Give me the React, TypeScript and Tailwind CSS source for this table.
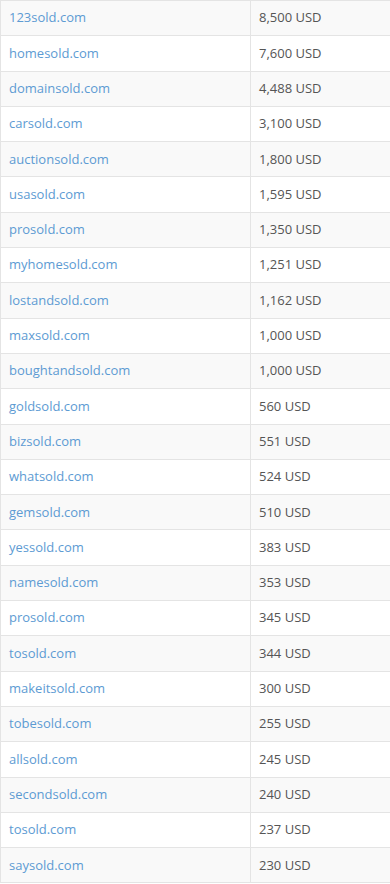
const rows: [string, string][] = [
  ["123sold.com", "8,500 USD"],
  ["homesold.com", "7,600 USD"],
  ["domainsold.com", "4,488 USD"],
  ["carsold.com", "3,100 USD"],
  ["auctionsold.com", "1,800 USD"],
  ["usasold.com", "1,595 USD"],
  ["prosold.com", "1,350 USD"],
  ["myhomesold.com", "1,251 USD"],
  ["lostandsold.com", "1,162 USD"],
  ["maxsold.com", "1,000 USD"],
  ["boughtandsold.com", "1,000 USD"],
  ["goldsold.com", "560 USD"],
  ["bizsold.com", "551 USD"],
  ["whatsold.com", "524 USD"],
  ["gemsold.com", "510 USD"],
  ["yessold.com", "383 USD"],
  ["namesold.com", "353 USD"],
  ["prosold.com", "345 USD"],
  ["tosold.com", "344 USD"],
  ["makeitsold.com", "300 USD"],
  ["tobesold.com", "255 USD"],
  ["allsold.com", "245 USD"],
  ["secondsold.com", "240 USD"],
  ["tosold.com", "237 USD"],
  ["saysold.com", "230 USD"],
];

export default function App() {
  return (
    <div className="w-[390px] h-[884px] overflow-hidden bg-white font-['Open_Sans',sans-serif] text-[13px]">
      <table className="w-full border-collapse border-l border-t border-[#e4e4e4]">
        <tbody>
          {rows.map(([domain, price], i) => (
            <tr
              key={i}
              className={`h-[35.3px] border-b border-[#e4e4e4] ${i % 2 === 0 ? "bg-[#f9f9f9]" : "bg-white"}`}
            >
              <td className="w-[250px] border-r border-[#e4e4e4] px-2 align-middle">
                <a href="#" className="text-[#5d9bd3]">
                  {domain}
                </a>
              </td>
              <td className="px-2 align-middle text-[#555]">{price}</td>
            </tr>
          ))}
        </tbody>
      </table>
    </div>
  );
}
